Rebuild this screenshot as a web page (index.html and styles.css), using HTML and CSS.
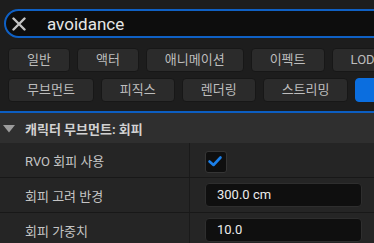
FILE: index.html
```html
<!DOCTYPE html>
<html lang="ko">
<head>
<meta charset="utf-8">
<link rel="stylesheet" href="styles.css">
</head>
<body>
<div class="panel">
  <div class="search-wrap">
    <div class="search">
      <svg class="clear" width="14" height="14" viewBox="0 0 14 14"><path d="M1.5 1.5 L12.5 12.5 M12.5 1.5 L1.5 12.5" stroke="#c4c4c4" stroke-width="2.4" stroke-linecap="round" fill="none"/></svg>
      <span class="query">avoidance</span>
    </div>
  </div>
  <div class="tags">
    <div class="tag-row">
      <span class="tag">일반</span>
      <span class="tag">액터</span>
      <span class="tag">애니메이션</span>
      <span class="tag">이펙트</span>
      <span class="tag">LOD</span>
    </div>
    <div class="tag-row">
      <span class="tag">무브먼트</span>
      <span class="tag">피직스</span>
      <span class="tag">렌더링</span>
      <span class="tag">스트리밍</span>
      <span class="tag tag-active"></span>
    </div>
  </div>
  <div class="section">
    <div class="section-head">
      <svg class="caret" width="12" height="8" viewBox="0 0 12 8"><polygon points="0,0 12,0 6,7.5" fill="#9c9c9c"/></svg>
      <span class="section-title">캐릭터 무브먼트: 회피</span>
    </div>
    <div class="prop">
      <div class="prop-name">RVO 회피 사용</div>
      <div class="prop-value">
        <span class="checkbox"><svg width="20" height="20" viewBox="0 0 20 20"><polyline points="4.5,10.5 8.5,14 15.5,6.5" fill="none" stroke="#1b7fe8" stroke-width="2.6" stroke-linecap="round" stroke-linejoin="round"/></svg></span>
      </div>
    </div>
    <div class="prop">
      <div class="prop-name">회피 고려 반경</div>
      <div class="prop-value"><span class="field">300.0 cm</span></div>
    </div>
    <div class="prop">
      <div class="prop-name">회피 가중치</div>
      <div class="prop-value"><span class="field">10.0</span></div>
    </div>
  </div>
</div>
</body>
</html>
```
FILE: styles.css
```css
html, body {
  margin: 0;
  padding: 0;
  background: #1d1d1d;
}
body {
  width: 374px;
  height: 243px;
  overflow: hidden;
  font-family: Roboto, "Noto Sans CJK KR", sans-serif;
  font-size: 13px;
}
.panel {
  width: 374px;
  overflow: hidden;
}
.search-wrap {
  padding: 9px 0 0 4px;
}
.search {
  display: flex;
  align-items: center;
  width: 420px;
  height: 25px;
  border: 2px solid #0f60c4;
  border-radius: 15px;
  background: #0d0d0d;
  padding-left: 6px;
}
.clear {
  flex: none;
  margin-top: 1px;
}
.query {
  margin-left: 21px;
  font-size: 17px;
  color: #e6e6e6;
  line-height: 20px;
}
.tags {
  display: flex;
  flex-direction: column;
  gap: 6px;
  padding: 10px 0 0 8px;
}
.tag-row {
  display: flex;
  gap: 7px;
  white-space: nowrap;
}
.tag {
  flex: none;
  height: 22px;
  line-height: 22px;
  padding: 0 18px;
  border: 1px solid #171717;
  border-radius: 4px;
  background: #2b2b2b;
  color: #bdbdbd;
}
.tag-active {
  width: 40px;
  background: #0b6edf;
  border-color: #0b6edf;
}
.section {
  margin-top: 9px;
  border-top: 2px solid #0c5ec2;
}
.section-head {
  display: flex;
  align-items: center;
  height: 30px;
  background: #2f2f2f;
  padding-left: 3px;
}
.caret {
  flex: none;
  margin-top: 1px;
}
.section-title {
  margin-left: 10px;
  font-weight: bold;
  color: #d2d2d2;
}
.prop {
  display: flex;
  height: 34px;
  background: #252525;
  border-bottom: 1px solid #181818;
}
.prop-name {
  width: 190px;
  flex: none;
  display: flex;
  align-items: center;
  padding-left: 25px;
  box-sizing: border-box;
  color: #c4c4c4;
  border-right: 1px solid #1a1a1a;
}
.prop-value {
  flex: 1;
  display: flex;
  align-items: center;
  padding-left: 15px;
}
.checkbox {
  display: block;
  width: 20px;
  height: 20px;
  margin-top: 3px;
  border: 1px solid #353535;
  border-radius: 3px;
  background: #0f0f0f;
}
.checkbox svg {
  display: block;
  margin: -1px 0 0 -1px;
}
.field {
  display: block;
  width: 144px;
  height: 22px;
  line-height: 22px;
  padding-left: 11px;
  border: 1px solid #2e2e2e;
  border-radius: 4px;
  background: #0f0f0f;
  color: #ececec;
}
```
